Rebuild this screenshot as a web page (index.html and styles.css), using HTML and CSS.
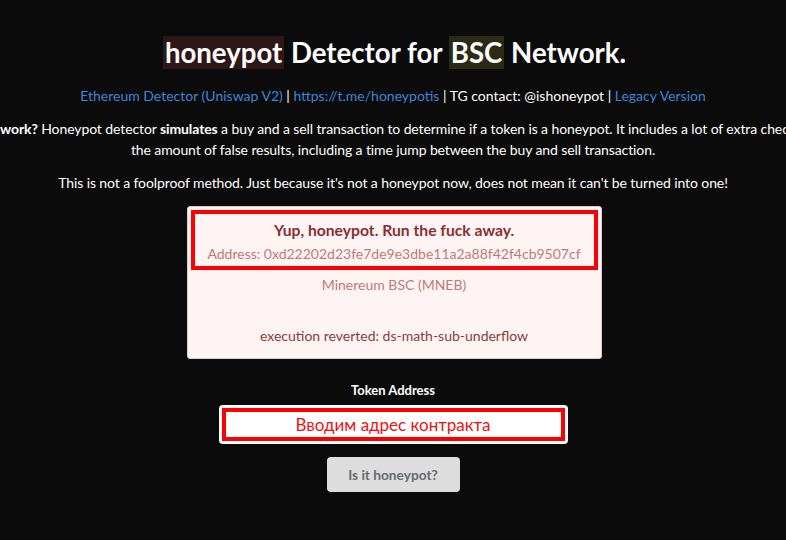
FILE: index.html
```html
<!DOCTYPE html>
<html>
<head>
<meta charset="utf-8">
<link rel="stylesheet" href="styles.css">
</head>
<body>
<main class="page">
  <h1 class="title"><span class="hl hl-red">honeypot</span> Detector for <span class="hl hl-olive">BSC</span> Network.</h1>
  <p class="links"><a href="#">Ethereum Detector (Uniswap V2)</a> | <a href="#">https://t.me/honeypotis</a> | TG contact: @ishoneypot | <a href="#">Legacy Version</a></p>
  <p class="desc"><b>How does it work?</b> Honeypot detector <b>simulates</b> a buy and a sell transaction to determine if a token is a honeypot. It includes a lot of extra checks to reduce<br>the amount of false results, including a time jump between the buy and sell transaction.</p>
  <p class="desc">This is not a foolproof method. Just because it's not a honeypot now, does not mean it can't be turned into one!</p>
  <div class="alert">
    <div class="mark">
      <div class="alert-title">Yup, honeypot. Run the fuck away.</div>
      <div class="alert-addr">Address: 0xd22202d23fe7de9e3dbe11a2a88f42f4cb9507cf</div>
    </div>
    <div class="alert-name">Minereum BSC (MNEB)</div>
    <div class="alert-err">execution reverted: ds-math-sub-underflow</div>
  </div>
  <label class="label">Token Address</label>
  <div class="input"><div class="input-mark">Вводим адрес контракта</div></div>
  <button class="btn">Is it honeypot?</button>
</main>
</body>
</html>
```
FILE: styles.css
```css
html, body {
  margin: 0;
  padding: 0;
  background: #0b0b0b;
  overflow: hidden;
}
body {
  font-family: Lato, "Noto Sans", sans-serif;
  color: #ffffff;
}
.page {
  display: flex;
  flex-direction: column;
  align-items: center;
  width: 786px;
  height: 540px;
  padding-top: 35px;
  box-sizing: border-box;
}
.title {
  margin: 0 0 0 3px;
  font-size: 27.6px;
  font-weight: 700;
  line-height: 36px;
  white-space: nowrap;
}
.hl {
  padding: 0 2px;
}
.hl-red { background: #2e1717; }
.hl-olive { background: #2b2a15; }
.links {
  margin: 15px 0 0;
  font-size: 14px;
  line-height: 20px;
  white-space: nowrap;
}
.links a {
  color: #3d87d8;
  text-decoration: none;
}
.desc {
  margin: 12px 0 0;
  font-size: 14px;
  line-height: 21px;
  text-align: center;
  white-space: nowrap;
  letter-spacing: -0.1px;
  flex-shrink: 0;
}
.desc:first-of-type { margin-top: 13px; }
.desc b { font-weight: 700; }
.alert {
  margin: 13px 0 0 2px;
  width: 415px;
  height: 153px;
  box-sizing: border-box;
  background: #fdf4f3;
  border: 1px solid #e4c9c9;
  border-radius: 3px;
  padding: 3px;
  text-align: center;
  display: flex;
  flex-direction: column;
}
.mark {
  border: 4px solid #ff0000;
  padding: 6px 0 2px;
}
.alert-title {
  font-size: 15.7px;
  font-weight: 700;
  color: #8a3030;
  line-height: 20px;
}
.alert-addr {
  margin-top: 4px;
  font-size: 14px;
  color: #c37979;
  line-height: 20px;
}
.alert-name {
  margin-top: 5px;
  font-size: 14px;
  color: #c37979;
  line-height: 20px;
}
.alert-err {
  margin-top: 31px;
  font-size: 14px;
  color: #8a3c3c;
  line-height: 20px;
}
.label {
  margin-top: 22px;
  font-size: 13px;
  font-weight: 700;
  line-height: 18px;
}
.input {
  margin-top: 6px;
  width: 349px;
  height: 39px;
  box-sizing: border-box;
  background: #ffffff;
  border-radius: 4px;
  padding: 3px;
}
.input-mark {
  height: 100%;
  box-sizing: border-box;
  border: 4px solid #ff0000;
  color: #f01010;
  font-size: 17px;
  line-height: 25px;
  text-align: center;
}
.btn {
  margin-top: 13px;
  width: 133px;
  height: 35px;
  border: none;
  border-radius: 4px;
  background: #dddddd;
  color: #666a70;
  font-family: Lato, sans-serif;
  font-size: 13.7px;
  font-weight: 700;
}
```
